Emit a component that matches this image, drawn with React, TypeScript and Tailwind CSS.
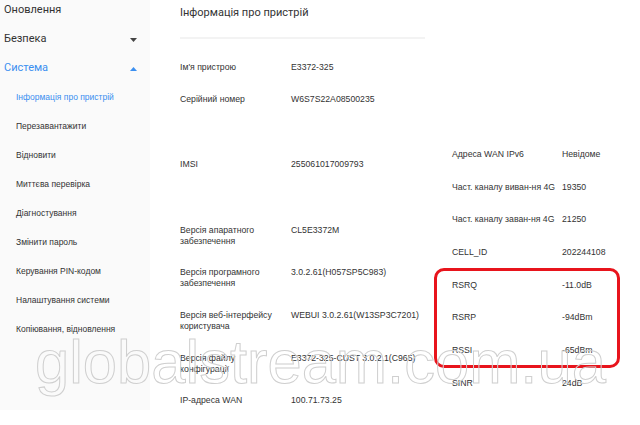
import React from "react";

const sans = "font-['Liberation_Sans',Arial,sans-serif]";
const roboto = "font-['Roboto','Liberation_Sans',sans-serif]";

const subItems = [
    "Інформація про пристрій",
    "Перезавантажити",
    "Відновити",
    "Миттєва перевірка",
    "Діагностування",
    "Змінити пароль",
    "Керування PIN-кодом",
    "Налаштування системи",
    "Копіювання, відновлення",
];

// mt: gap above the row, in px
const leftRows = [
    { mt: "mt-[23px]", label: ["Ім'я пристрою"], value: "E3372-325" },
    { mt: "mt-[21px]", label: ["Серійний номер"], value: "W6S7S22A08500235" },
    { mt: "mt-[54px]", label: ["IMSI"], value: "255061017009793" },
    { mt: "mt-[55px]", label: ["Версія апаратного", "забезпечення"], value: "CL5E3372M" },
    { mt: "mt-[20px]", label: ["Версія програмного", "забезпечення"], value: "3.0.2.61(H057SP5C983)" },
    { mt: "mt-[21px]", label: ["Версія веб-інтерфейсу", "користувача"], value: "WEBUI 3.0.2.61(W13SP3C7201)" },
    { mt: "mt-[21px]", label: ["Версія файлу", "конфігурації"], value: "E3372-325-CUST 3.0.2.1(C965)" },
    { mt: "mt-[20px]", label: ["IP-адреса WAN"], value: "100.71.73.25" },
];

const rightRows = [
    ["Адреса WAN IPv6", "Невідоме"],
    ["Част. каналу виван-ня 4G", "19350"],
    ["Част. каналу заван-ня 4G", "21250"],
    ["CELL_ID", "202244108"],
    ["RSRQ", "-11.0dB"],
    ["RSRP", "-94dBm"],
    ["RSSI", "-65dBm"],
    ["SINR", "24dB"],
];

const Caret = ({ up, color }: { up?: boolean; color: string }) => (
    <svg width="7" height="4" viewBox="0 0 7 4" className="block">
        <path d={up ? "M0 4 L3.5 0 L7 4 Z" : "M0 0 L7 0 L3.5 4 Z"} fill={color} />
    </svg>
);

export default function App() {
    return (
        <div className={`relative w-[640px] h-[425px] overflow-hidden bg-white flex text-[#333] ${sans}`}>
            <aside className="w-[150px] h-[410px] shrink-0 bg-[#fafafa]">
                <div className="-mt-[4px]">
                    <div className={`h-[29px] flex items-center pl-[4px] text-[11px] ${roboto}`}>Оновлення</div>
                    <div className={`h-[29px] flex items-center justify-between pl-[4px] pr-[13px] text-[11px] ${roboto}`}>
                        <span>Безпека</span>
                        <Caret color="#444" />
                    </div>
                    <div className={`h-[29px] flex items-center justify-between pl-[4px] pr-[13px] text-[11px] text-[#3b8ff0] ${roboto}`}>
                        <span>Система</span>
                        <Caret up color="#3b8ff0" />
                    </div>
                    {subItems.map((s, i) => (
                        <div
                            key={s}
                            className={`h-[29px] flex items-center pl-[16px] text-[8.5px] ${i === 0 ? "text-[#3b8ff0]" : "text-[#333]"}`}>
                            {s}
                        </div>
                    ))}
                </div>
            </aside>

            <main className="flex pl-[30px]">
                <section className="w-[245px]">
                    <div className={`h-[26px] flex items-center text-[11px] ${roboto}`}>Інформація про пристрій</div>
                    <div className="mt-[11px] h-[2px] bg-[#f3f3f3]" />
                    {leftRows.map((r) => (
                        <div key={r.value} className={`${r.mt} flex text-[8.7px] leading-[11px]`}>
                            <div className="w-[111px] shrink-0">
                                {r.label.map((l) => (
                                    <div key={l}>{l}</div>
                                ))}
                            </div>
                            <div className="whitespace-nowrap">{r.value}</div>
                        </div>
                    ))}
                </section>

                <section className="ml-[27px] w-[170px] pt-[138px]">
                    {rightRows.map(([k, v]) => (
                        <div key={k} className="h-[32.7px] flex items-center text-[8.7px]">
                            <div className="w-[110px] shrink-0 whitespace-nowrap">{k}</div>
                            <div className="whitespace-nowrap">{v}</div>
                        </div>
                    ))}
                </section>
            </main>

            <div className="absolute left-[434px] top-[268px] w-[186px] h-[100px] border-[3px] border-[#e8141c] rounded-[10px]" />

            <div className="absolute left-[35px] top-[322px] text-[61.5px] leading-[80px] text-transparent whitespace-nowrap [-webkit-text-stroke:1px_#cfcfcf] pointer-events-none">
                globalstream.com.ua
            </div>
        </div>
    );
}
